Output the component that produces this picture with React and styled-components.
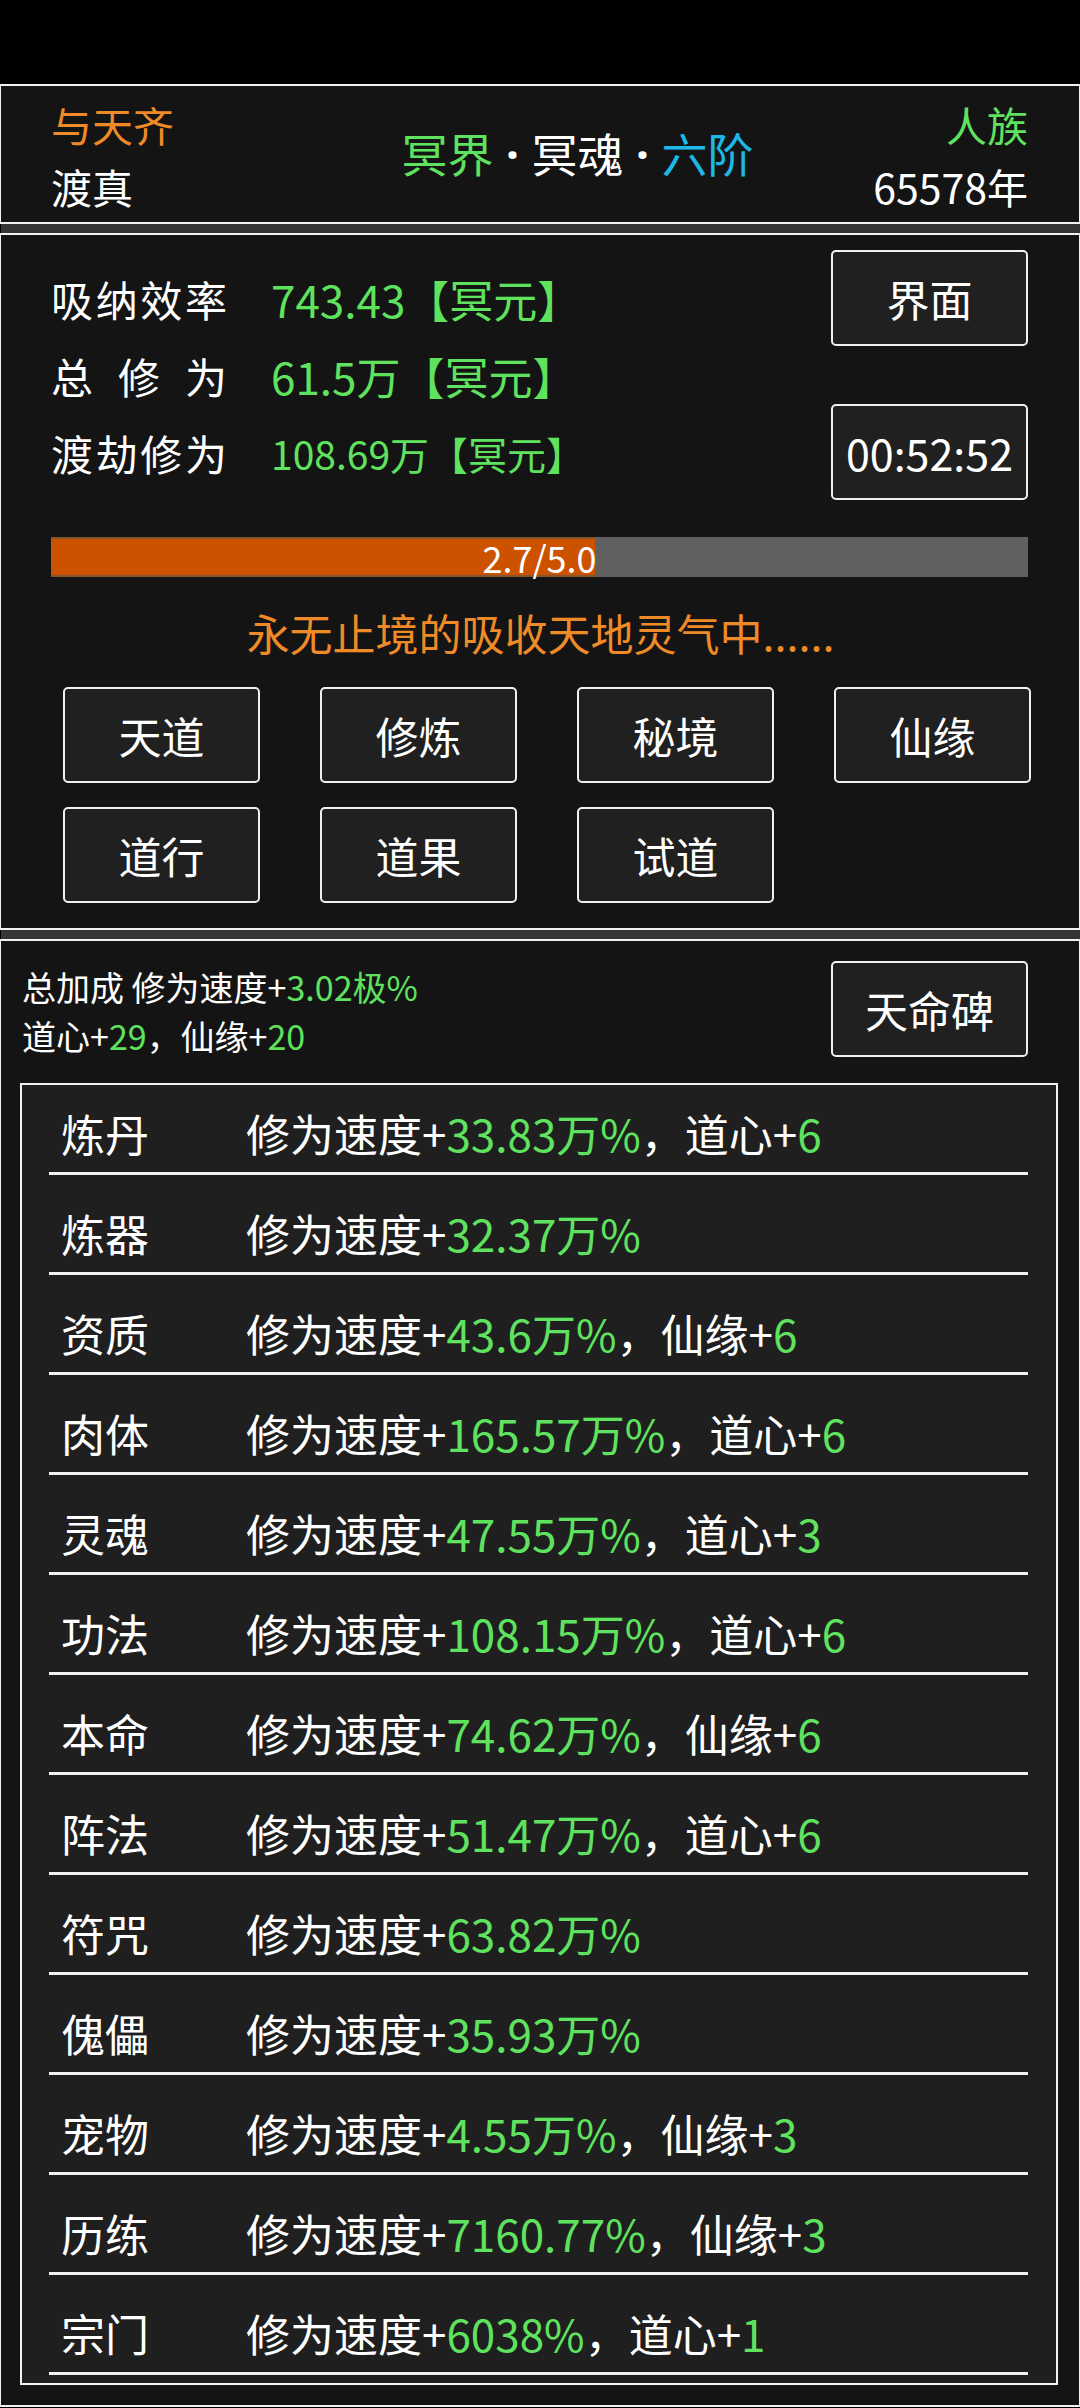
import React from "react";
import styled, { createGlobalStyle } from "styled-components";

const GREEN = "#5fe35f";
const ORANGE = "#ef8a28";
const CYAN = "#1cb8e8";

const GlobalStyle = createGlobalStyle`
  html, body {
    margin: 0;
    padding: 0;
    background: #000;
  }
  body {
    font-family: "Noto Sans CJK SC", "Noto Sans", sans-serif;
    color: #fff;
  }
  * {
    box-sizing: border-box;
  }
`;

const stats = [
  { label: "吸纳效率", value: "743.43【冥元】", size: 44 },
  { label: "总修为", value: "61.5万【冥元】", size: 44 },
  { label: "渡劫修为", value: "108.69万【冥元】", size: 39 },
];

const actions = ["天道", "修炼", "秘境", "仙缘", "道行", "道果", "试道"];

const bonuses = [
  ["炼丹", "33.83万%", "道心", "6"],
  ["炼器", "32.37万%"],
  ["资质", "43.6万%", "仙缘", "6"],
  ["肉体", "165.57万%", "道心", "6"],
  ["灵魂", "47.55万%", "道心", "3"],
  ["功法", "108.15万%", "道心", "6"],
  ["本命", "74.62万%", "仙缘", "6"],
  ["阵法", "51.47万%", "道心", "6"],
  ["符咒", "63.82万%"],
  ["傀儡", "35.93万%"],
  ["宠物", "4.55万%", "仙缘", "3"],
  ["历练", "7160.77%", "仙缘", "3"],
  ["宗门", "6038%", "道心", "1"],
];

function App() {
  return (
    <Page>
      <GlobalStyle />
      <StatusBar />

      <Panel>
        <Header>
          <Side>
            <SideText color={ORANGE}>与天齐</SideText>
            <SideText>渡真</SideText>
          </Side>
          <Title>
            <Tint color={GREEN}>冥界</Tint>
            <Dot>·</Dot>冥魂<Dot>·</Dot>
            <Tint color={CYAN}>六阶</Tint>
          </Title>
          <Side align="flex-end">
            <SideText color={GREEN}>人族</SideText>
            <SideText>65578年</SideText>
          </Side>
        </Header>
      </Panel>

      <Band />

      <Panel>
        <Main>
          <TopRow>
            <Stats>
              {stats.map((s) => (
                <StatRow key={s.label}>
                  <StatLabel>{s.label}</StatLabel>
                  <StatValue size={s.size}>{s.value}</StatValue>
                </StatRow>
              ))}
            </Stats>
            <SideButtons>
              <Button>界面</Button>
              <Button>00:52:52</Button>
            </SideButtons>
          </TopRow>

          <Progress>
            <ProgressFill style={{ width: "55.7%" }} />
            <ProgressText>2.7/5.0</ProgressText>
          </Progress>

          <Status>永无止境的吸收天地灵气中......</Status>

          <ActionGrid>
            {actions.map((a) => (
              <Button key={a}>{a}</Button>
            ))}
          </ActionGrid>
        </Main>
      </Panel>

      <Band />

      <Panel>
        <Bottom>
          <SummaryRow>
            <Summary>
              <div>
                总加成 修为速度+<Tint color={GREEN}>3.02极%</Tint>
              </div>
              <div>
                道心+<Tint color={GREEN}>29</Tint>，仙缘+<Tint color={GREEN}>20</Tint>
              </div>
            </Summary>
            <Button>天命碑</Button>
          </SummaryRow>

          <BonusList>
            {bonuses.map(([name, speed, extra, amount]) => (
              <BonusRow key={name}>
                <BonusName>{name}</BonusName>
                <BonusValue>
                  修为速度+<Tint color={GREEN}>{speed}</Tint>
                  {extra && (
                    <>
                      ，{extra}+<Tint color={GREEN}>{amount}</Tint>
                    </>
                  )}
                </BonusValue>
              </BonusRow>
            ))}
          </BonusList>
        </Bottom>
      </Panel>
    </Page>
  );
}

const Page = styled.div`
  width: 1080px;
  min-height: 2408px;
  background: #000;
  overflow: hidden;
`;

const StatusBar = styled.div`
  height: 84px;
  background: #000;
`;

const Panel = styled.section`
  background: #141414;
  border: 2px solid #f2f2f2;
  border-left-width: 1px;
  border-right-width: 1px;
`;

const Band = styled.div`
  height: 9px;
  background: #353535;
  margin-left: 1px;
`;

const Tint = styled.span`
  color: ${(p) => p.color};
`;

const Header = styled.div`
  height: 136px;
  padding: 0 51px 0 50px;
  display: flex;
  align-items: center;
  justify-content: space-between;
`;

const Side = styled.div`
  width: 200px;
  display: flex;
  flex-direction: column;
  align-items: ${(p) => p.align || "flex-start"};
  gap: 6px;
  padding-top: 2px;
`;

const SideText = styled.div`
  color: ${(p) => p.color || "#fff"};
  font-size: 41px;
  line-height: 56px;
`;

const Title = styled.div`
  font-size: 46px;
  line-height: 60px;
  color: #fff;
  margin-top: -3px;
  margin-left: 76px;
  white-space: nowrap;
`;

const Dot = styled.span`
  display: inline-block;
  width: 38px;
  text-align: center;
  font-family: "Noto Sans", sans-serif;
  font-weight: 700;
`;

const Main = styled.div`
  padding: 15px 51px 25px 50px;
`;

const TopRow = styled.div`
  display: flex;
  justify-content: space-between;
`;

const Stats = styled.div`
  padding-top: 10px;
  display: flex;
  flex-direction: column;
`;

const StatRow = styled.div`
  height: 77px;
  display: flex;
  align-items: center;
  gap: 44px;
`;

const StatLabel = styled.span`
  width: 176px;
  font-size: 42px;
  text-align: justify;
  text-align-last: justify;
`;

const StatValue = styled.span`
  color: ${GREEN};
  font-size: ${(p) => p.size}px;
`;

const SideButtons = styled.div`
  width: 197px;
  display: flex;
  flex-direction: column;
  gap: 58px;
`;

const Button = styled.div`
  height: 96px;
  width: 197px;
  border: 2.5px solid #f0f0f0;
  border-radius: 5px;
  background: #202020;
  color: #fff;
  font-size: 43px;
  display: flex;
  align-items: center;
  justify-content: center;
`;

const Progress = styled.div`
  position: relative;
  margin-top: 37px;
  height: 40px;
  background: #606060;
`;

const ProgressFill = styled.div`
  height: 100%;
  background: #cc5200;
  border-top: 2px solid #85552e;
  border-bottom: 2px solid #85552e;
`;

const ProgressText = styled.div`
  position: absolute;
  inset: 0;
  display: flex;
  align-items: center;
  justify-content: center;
  font-size: 36px;
  color: #fff;
`;

const Status = styled.div`
  margin-top: 27px;
  text-align: center;
  color: ${ORANGE};
  font-size: 43px;
  line-height: 56px;
  padding-left: 2px;
`;

const ActionGrid = styled.div`
  margin: 27px 0 0 12px;
  display: grid;
  grid-template-columns: repeat(4, 197px);
  column-gap: 60px;
  row-gap: 24px;
`;

const Bottom = styled.div`
  padding: 20px 51px 20px 19px;
`;

const SummaryRow = styled.div`
  display: flex;
  justify-content: space-between;
  align-items: flex-start;
  padding-left: 2px;
`;

const Summary = styled.div`
  font-size: 34px;
  line-height: 49px;
  padding-top: 1px;
`;

const BonusList = styled.div`
  margin-top: 23px;
  margin-right: -30px;
  border: 2px solid #f2f2f2;
  background: #1f1f1f;
  padding: 0 28px 8px 27px;
`;

const BonusRow = styled.div`
  display: flex;
  align-items: center;
  height: 100px;
  padding: 30px 0 11px 12px;
  border-bottom: 3px solid #f2f2f2;

  &:first-child {
    height: 90px;
    padding-top: 20px;
  }
`;

const BonusName = styled.span`
  width: 185px;
  font-size: 44px;
  line-height: 56px;
`;

const BonusValue = styled.span`
  font-size: 44px;
  line-height: 56px;
  white-space: nowrap;
`;

export default App;
